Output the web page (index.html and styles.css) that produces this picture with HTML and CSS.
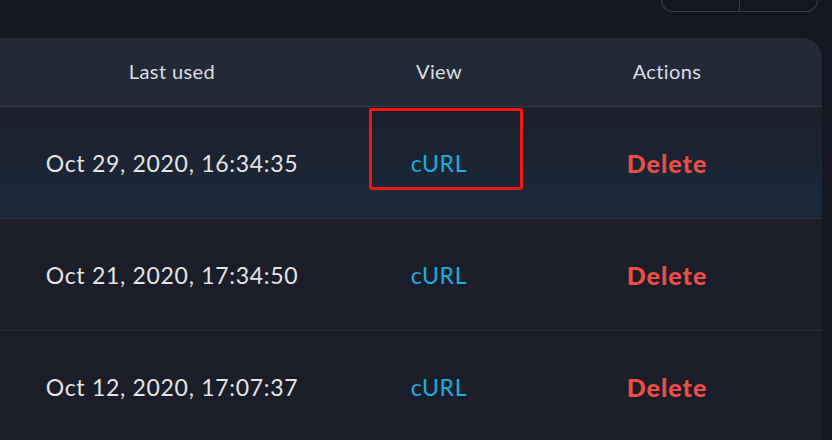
FILE: index.html
```html
<!DOCTYPE html>
<html>

<head>
    <link rel="stylesheet" href="styles.css">
</head>

<body>
    <div class="toolbar">
        <div class="btn-group">
            <span class="btn"></span>
            <span class="btn"></span>
        </div>
    </div>

    <div class="card">
        <div class="row head">
            <div class="col col-used">Last used</div>
            <div class="col col-view">View</div>
            <div class="col col-actions">Actions</div>
        </div>
        <div class="row active">
            <div class="col col-used">Oct 29, 2020, 16:34:35</div>
            <div class="col col-view"><a class="link" href="#">cURL</a></div>
            <div class="col col-actions"><a class="delete" href="#">Delete</a></div>
            <div class="highlight"></div>
        </div>
        <div class="row">
            <div class="col col-used">Oct 21, 2020, 17:34:50</div>
            <div class="col col-view"><a class="link" href="#">cURL</a></div>
            <div class="col col-actions"><a class="delete" href="#">Delete</a></div>
        </div>
        <div class="row">
            <div class="col col-used">Oct 12, 2020, 17:07:37</div>
            <div class="col col-view"><a class="link" href="#">cURL</a></div>
            <div class="col col-actions"><a class="delete" href="#">Delete</a></div>
        </div>
    </div>
</body>

</html>
```

FILE: styles.css
```css
body {
    margin: 0;
    background-color: #141722;
    font-family: Lato, "Open Sans", sans-serif;
    overflow: hidden;
}

.toolbar {
    height: 38px;
    display: flex;
    justify-content: flex-end;
    padding-right: 14px;
    box-sizing: border-box;
}

.btn-group {
    display: flex;
    height: 11px;
    border: 1px solid #3a3d49;
    border-top: none;
    border-radius: 0 0 13px 13px;
}

.btn {
    width: 77px;
}

.btn + .btn {
    border-left: 1px solid #3a3d49;
}

.card {
    width: 822px;
    background-color: #1b1e29;
    border-top-right-radius: 20px;
    overflow: hidden;
}

.row {
    position: relative;
    display: flex;
    align-items: center;
    height: 111px;
    border-top: 1px solid #2a2e3a;
    font-size: 23px;
    letter-spacing: 0.7px;
    color: #e4e4e6;
}

.row.head {
    height: 69px;
    padding-bottom: 3px;
    box-sizing: border-box;
    border-top: none;
    border-bottom: 1px solid #343a48;
    background-color: #232a37;
    font-size: 20px;
    letter-spacing: 0.4px;
    color: #dadde3;
}

.row.head + .row {
    border-top: none;
}

.row.active {
    background: linear-gradient(to bottom, #1b1e2b, #1a2a3b);
}

.col {
    text-align: center;
}

.col-used {
    width: 344px;
}

.col-view {
    width: 190px;
}

.col-actions {
    width: 266px;
}

.link {
    color: #17aee0;
    text-decoration: none;
}

.delete {
    color: #ee4d45;
    font-size: 25px;
    font-weight: 900;
    letter-spacing: 1px;
    text-decoration: none;
}

.highlight {
    position: absolute;
    left: 369px;
    top: 1px;
    width: 148px;
    height: 76px;
    border: 3px solid #f5160f;
    border-radius: 3px;
}
```
